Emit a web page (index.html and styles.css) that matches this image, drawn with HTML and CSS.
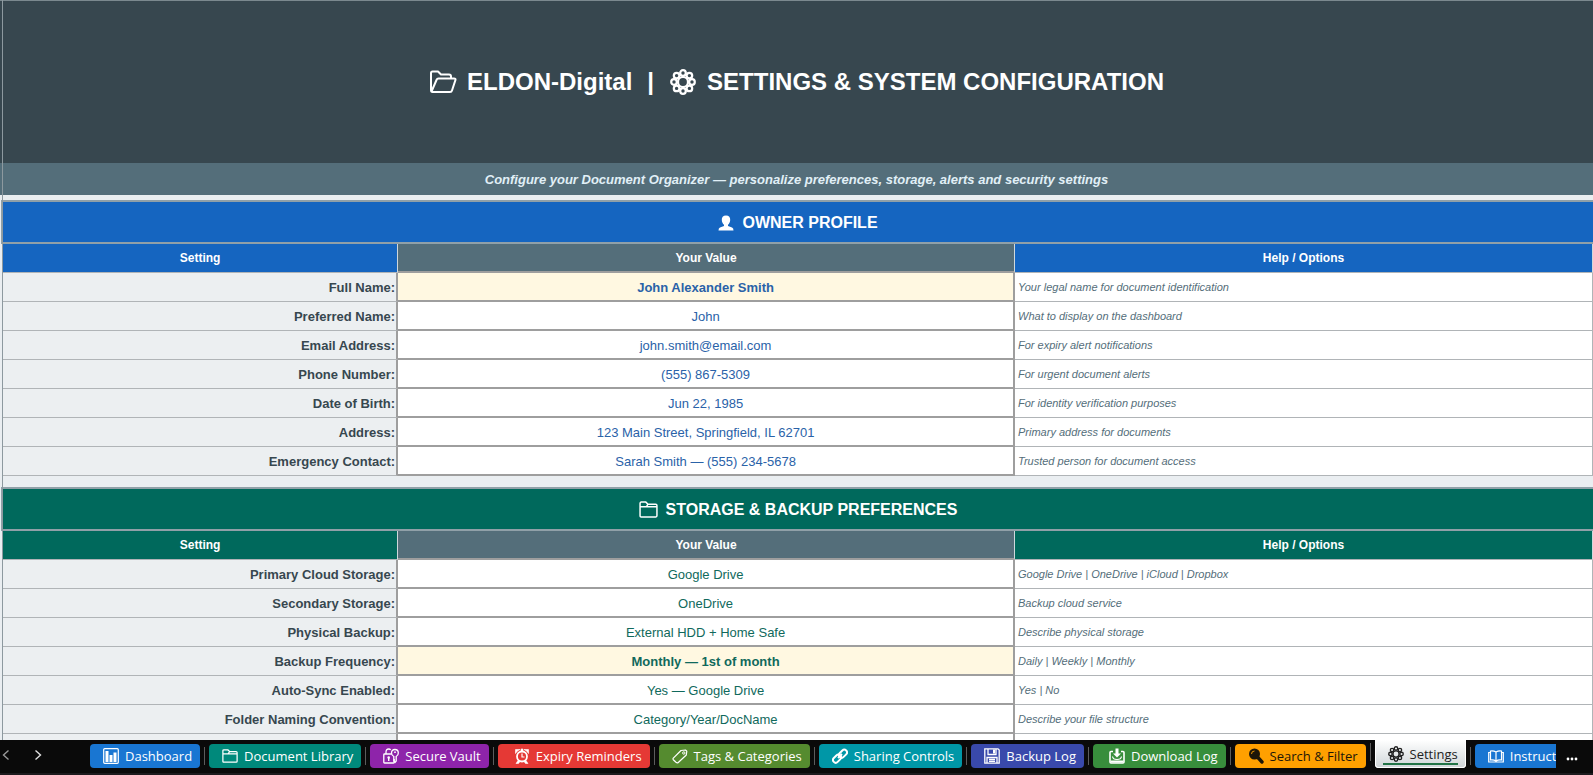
FILE: index.html
```html
<!DOCTYPE html>
<html lang="en">
<head>
    <meta charset="UTF-8">
    <meta name="viewport" content="width=device-width, initial-scale=1.0">
    <title>ELDON-Digital | Settings</title>
    <link rel="stylesheet" href="styles.css">
</head>
<body>
    <!-- Shared icons -->
    <svg class="icon-defs" aria-hidden="true">
        <symbol id="icon-gear" viewBox="0 0 26 26">
            <g fill="none" stroke="currentColor" stroke-width="2.2">
                <circle cx="13" cy="13" r="5"/>
                <circle cx="13" cy="4" r="2.800"/>
                <circle cx="19.400" cy="6.600" r="2.800"/>
                <circle cx="22" cy="13" r="2.800"/>
                <circle cx="19.400" cy="19.400" r="2.800"/>
                <circle cx="13" cy="22" r="2.800"/>
                <circle cx="6.600" cy="19.400" r="2.800"/>
                <circle cx="4" cy="13" r="2.800"/>
                <circle cx="6.600" cy="6.600" r="2.800"/>
            </g>
        </symbol>
        <symbol id="icon-folder" viewBox="0 0 18 16">
            <path d="M1 14V2.2Q1 1 2.2 1H6.5L8.5 3H15.8Q17 3 17 4.2V14Q17 15 16 15H2Q1 15 1 14ZM1 5.5H7L8.5 3M7 5.500H17" fill="none" stroke="currentColor" stroke-width="1.4" stroke-linejoin="round"/>
        </symbol>
    </svg>

    <main class="sheet">
        <header class="sheet-header">
            <h1 class="title">
                <svg class="title-icon" viewBox="0 0 28 24"><path d="M2 20V3Q2 1.5 3.500 1.500H9L12 4.500H20Q22 4.500 22 6.500V8.500M2.500 21.500L7.500 10Q8 8.500 9.500 8.500H25Q27 8.500 26.400 10.200L23 20.500Q22.600 22 21 22H3.500Q2 22 2 20" fill="none" stroke="currentColor" stroke-width="2" stroke-linejoin="round"/></svg>
                <span>ELDON-Digital</span>
                <span class="divider">|</span>
                <svg class="title-icon"><use href="#icon-gear"/></svg>
                <span>SETTINGS &amp; SYSTEM CONFIGURATION</span>
            </h1>
        </header>
        <p class="subtitle">Configure your Document Organizer — personalize preferences, storage, alerts and security settings</p>

        <section class="section profile">
            <h2 class="section-title">
                <svg class="person-icon" viewBox="0 0 16 16"><path d="M8 0.500C5 0.500 3.600 2.400 3.800 5C3.900 7.200 4.800 8.700 6 9.800V11L2 12.500Q0.500 13.200 0.500 15.500H15.500Q15.500 13.200 14 12.500L10 11V9.800C11.200 8.700 12.100 7.200 12.200 5C12.400 2.400 11 0.500 8 0.500Z" fill="currentColor"/></svg>
                OWNER PROFILE
            </h2>
            <table>
                <thead>
                    <tr><th scope="col" class="col-setting">Setting</th><th scope="col" class="col-value">Your Value</th><th scope="col" class="col-help">Help / Options</th></tr>
                </thead>
                <tbody>
                    <tr><th scope="row">Full Name:</th><td class="value highlight">John Alexander Smith</td><td class="help">Your legal name for document identification</td></tr>
                    <tr><th scope="row">Preferred Name:</th><td class="value">John</td><td class="help">What to display on the dashboard</td></tr>
                    <tr><th scope="row">Email Address:</th><td class="value">john.smith@email.com</td><td class="help">For expiry alert notifications</td></tr>
                    <tr><th scope="row">Phone Number:</th><td class="value">(555) 867-5309</td><td class="help">For urgent document alerts</td></tr>
                    <tr><th scope="row">Date of Birth:</th><td class="value">Jun 22, 1985</td><td class="help">For identity verification purposes</td></tr>
                    <tr><th scope="row">Address:</th><td class="value">123 Main Street, Springfield, IL 62701</td><td class="help">Primary address for documents</td></tr>
                    <tr><th scope="row">Emergency Contact:</th><td class="value">Sarah Smith — (555) 234-5678</td><td class="help">Trusted person for document access</td></tr>
                </tbody>
            </table>
        </section>

        <section class="section storage">
            <h2 class="section-title">
                <svg class="folder-icon"><use href="#icon-folder"/></svg>
                STORAGE &amp; BACKUP PREFERENCES
            </h2>
            <table>
                <thead>
                    <tr><th scope="col" class="col-setting">Setting</th><th scope="col" class="col-value">Your Value</th><th scope="col" class="col-help">Help / Options</th></tr>
                </thead>
                <tbody>
                    <tr><th scope="row">Primary Cloud Storage:</th><td class="value">Google Drive</td><td class="help">Google Drive | OneDrive | iCloud | Dropbox</td></tr>
                    <tr><th scope="row">Secondary Storage:</th><td class="value">OneDrive</td><td class="help">Backup cloud service</td></tr>
                    <tr><th scope="row">Physical Backup:</th><td class="value">External HDD + Home Safe</td><td class="help">Describe physical storage</td></tr>
                    <tr><th scope="row">Backup Frequency:</th><td class="value highlight">Monthly — 1st of month</td><td class="help">Daily | Weekly | Monthly</td></tr>
                    <tr><th scope="row">Auto-Sync Enabled:</th><td class="value">Yes — Google Drive</td><td class="help">Yes | No</td></tr>
                    <tr><th scope="row">Folder Naming Convention:</th><td class="value">Category/Year/DocName</td><td class="help">Describe your file structure</td></tr>
                    <tr><th scope="row"></th><td class="value"></td><td class="help"></td></tr>
                </tbody>
            </table>
        </section>
    </main>

    <nav class="tab-bar">
        <div class="arrows">
            <button class="arrow dim" aria-label="Previous sheets"><svg viewBox="0 0 8 12"><path d="M6.500 1.500L1.500 6L6.500 10.500"/></svg></button>
            <button class="arrow" aria-label="Next sheets"><svg viewBox="0 0 8 12"><path d="M1.500 1.500L6.500 6L1.500 10.500"/></svg></button>
        </div>
        <div class="tabs">
            <button class="tab tab-dashboard">
                <svg viewBox="0 0 16 16"><rect x="0.700" y="0.700" width="14.600" height="14.600" rx="1" fill="none" stroke="currentColor" stroke-width="1.200"/><path d="M2.500 3H5.500V14H2.500ZM6.500 7H9.500V14H6.500ZM10.500 4.500H13.500V14H10.500Z" fill="currentColor"/></svg>
                Dashboard
            </button>
            <button class="tab tab-library">
                <svg viewBox="0 0 18 16"><use href="#icon-folder"/></svg>
                Document Library
            </button>
            <button class="tab tab-vault">
                <svg viewBox="0 0 16 16"><g fill="none" stroke="currentColor" stroke-width="1.300"><path d="M8.500 6H1.500Q0.800 6 0.800 6.700V14.300Q0.800 15 1.500 15H10.500Q11.200 15 11.200 14.300V11M3 6V4Q3 1 5.700 1Q7 1 7.700 2"/><path d="M10.800 8.500Q8.500 7.500 8.500 5Q8.500 1.500 11.900 1.500Q15.300 1.500 15.300 5Q15.300 7.500 13.200 8.500V13L12 14.500L10.800 13Z"/></g><circle cx="5.700" cy="9.500" r="1.300" fill="currentColor"/><path d="M5 10H6.400V13H5Z" fill="currentColor"/><circle cx="12" cy="4.200" r="0.900" fill="currentColor"/></svg>
                Secure Vault
            </button>
            <button class="tab tab-expiry">
                <svg viewBox="0 0 16 16"><circle cx="8" cy="8.500" r="5" fill="none" stroke="currentColor" stroke-width="1.800"/><path d="M8 5.500V9H10.500" fill="none" stroke="currentColor" stroke-width="1.200"/><path d="M1.500 5.500V1.500H6Q3 2.500 1.500 5.500ZM14.500 5.500V1.500H10Q13 2.500 14.500 5.500ZM2 15.500L4 12.500L6 13.500L4.500 15.500ZM14 15.500L12 12.500L10 13.500L11.500 15.500ZM7 1H9V3H7Z" fill="currentColor" stroke="currentColor" stroke-width="0.600"/></svg>
                Expiry Reminders
            </button>
            <button class="tab tab-tags">
                <svg viewBox="0 0 16 16"><path d="M1.300 10.200L9 2.500L13.500 2L14.800 3.200L14.300 7L6 14.700Q5 15.200 4 14.300L1.300 11.700Q0.700 11 1.300 10.200Z" fill="none" stroke="currentColor" stroke-width="1.200" stroke-linejoin="round"/><circle cx="11.800" cy="5" r="1.200" fill="none" stroke="currentColor"/></svg>
                Tags &amp; Categories
            </button>
            <button class="tab tab-sharing">
                <svg viewBox="0 0 16 16"><g fill="none" stroke="currentColor" stroke-width="2"><rect x="6.500" y="3" width="9" height="5.400" rx="2.700" transform="rotate(-45 11 5.700)"/><rect x="0.500" y="8" width="9" height="5.400" rx="2.700" transform="rotate(-45 5 10.700)"/><path d="M6 10L10 6"/></g></svg>
                Sharing Controls
            </button>
            <button class="tab tab-backup">
                <svg viewBox="0 0 16 16"><g fill="none" stroke="currentColor" stroke-width="1.300"><path d="M0.800 0.800H14L15.200 2V15.200H0.800Z"/><path d="M4 1V6.500H12V1M3 15V9.500H13V15M5 11.500H11M5 13.300H11"/></g><path d="M9 1.500H11V5.500H9Z" fill="currentColor"/></svg>
                Backup Log
            </button>
            <button class="tab tab-download">
                <svg viewBox="0 0 16 16"><path d="M4 3.500H2Q1 3.500 1 4.500V14Q1 15 2 15H14Q15 15 15 14V4.500Q15 3.500 14 3.500H12" fill="none" stroke="currentColor" stroke-width="1.600"/><path d="M6.500 0.500H9.500V5.500H12L8 9.500L4 5.500H6.500Z" fill="currentColor"/><path d="M3.500 8.500Q4 11.500 8 11.500Q12 11.500 12.500 8.500" fill="none" stroke="currentColor" stroke-width="1.200"/><path d="M1.500 12.500H14.500V14.500H1.500Z" fill="currentColor"/></svg>
                Download Log
            </button>
            <button class="tab tab-search">
                <svg viewBox="0 0 16 16"><circle cx="6.500" cy="6" r="5.500" fill="currentColor"/><path d="M9.500 9L14 14" stroke="currentColor" stroke-width="3.400" stroke-linecap="round"/><path d="M3.500 6Q3.500 3 6.500 3" fill="none" stroke="#ffa000" stroke-width="0.900"/></svg>
                Search &amp; Filter
            </button>
            <button class="tab tab-settings" aria-current="page">
                <svg viewBox="0 0 26 26"><use href="#icon-gear"/></svg>
                <span>Settings</span>
            </button>
            <button class="tab tab-instructions">
                <svg viewBox="0 0 16 16"><path d="M8 4Q5.500 2.500 2.500 3V12Q5.500 11.500 8 13Q10.500 11.500 13.500 12V3Q10.500 2.500 8 4V13M2.500 4.500H0.700V14H15.300V4.500H13.500" fill="none" stroke="currentColor" stroke-width="1.200"/></svg>
                Instructions
            </button>
        </div>
        <button class="more" aria-label="More sheets"><svg viewBox="0 0 12 4"><circle cx="2" cy="2" r="1.400"/><circle cx="6" cy="2" r="1.400"/><circle cx="10" cy="2" r="1.400"/></svg></button>
    </nav>
</body>
</html>
```
FILE: styles.css
```css
* {
    box-sizing: border-box;
}
body {
    display: flex;
    flex-direction: column;
    height: 100vh;
    margin: 0;
    overflow: hidden;
    background-color: #eaeef1;
    font-family: "Liberation Sans", Arial, sans-serif;
}
button {
    border: none;
    font-family: inherit;
    cursor: pointer;
}
.icon-defs {
    position: absolute;
    width: 0;
    height: 0;
}

/* Sheet */
.sheet {
    position: relative;
    flex: 1;
    min-height: 0;
    overflow: hidden;
}
/* gridline down the left edge */
.sheet::before {
    content: "";
    position: absolute;
    top: 0;
    bottom: 0;
    left: 2px;
    width: 1px;
    background-color: #8d999f;
}
.sheet-header {
    border-top: 1px solid #7b898f;
    background-color: #37474f;
    color: white;
}
.title {
    display: flex;
    justify-content: center;
    align-items: center;
    gap: 10px;
    margin: 0;
    padding: 66px 0;
    font-size: 24px;
    line-height: 30px;
}
.title-icon {
    width: 28px;
    height: 26px;
}
.divider {
    padding: 0 5px;
}
.subtitle {
    margin: 0 0 5px;
    padding-top: 2px;
    background-color: #546e7a;
    color: #e1f0f7;
    font-size: 13px;
    font-style: italic;
    font-weight: bold;
    line-height: 30px;
    text-align: center;
}
.section {
    margin: 0 0 11px 2px;
}
.section-title {
    display: flex;
    justify-content: center;
    align-items: center;
    gap: 8px;
    margin: 0 0 0 -1px;
    padding-top: 1px;
    border: 2px solid #90a0a8;
    border-right: none;
    color: white;
    font-size: 16px;
    line-height: 39px;
}
.person-icon {
    width: 16px;
    height: 16px;
}
.folder-icon {
    width: 19px;
    height: 17px;
}

/* Settings tables */
table {
    width: 100%;
    table-layout: fixed;
    border-collapse: separate;
    border-spacing: 0;
    border-left: 1px solid #9e9e9e;
    background-color: white;
}
thead th {
    height: 29px;
    padding: 0;
    border-right: 1px solid #cfd8dc;
    border-bottom: 1px solid #b0b4b7;
    color: white;
    font-size: 12px;
}
.col-setting {
    width: 24.85%;
}
thead .col-value {
    width: 38.8%;
    border-bottom: 2px solid #9e9e9e;
    background-color: #546e7a;
}
.profile .section-title,
.profile .col-setting,
.profile .col-help {
    background-color: #1565c0;
}
.storage .section-title,
.storage .col-setting,
.storage .col-help {
    background-color: #00695c;
}
tbody th,
td {
    height: 29px;
    padding: 1px 3px 0;
    border-bottom: 1px solid #b0b4b7;
}
tbody th {
    padding-right: 1px;
    border-right: 2px solid #9e9e9e;
    background-color: #eceff1;
    color: #37474f;
    font-size: 13px;
    text-align: right;
}
.value {
    border-right: 2px solid #9e9e9e;
    border-bottom: 2px solid #9e9e9e;
    font-size: 13px;
    text-align: center;
}
.profile .value {
    color: #2a62a8;
}
.storage .value {
    color: #10695c;
}
.highlight {
    background-color: #fff8e1;
    font-weight: bold;
}
.help {
    padding-top: 0;
    border-right: 1px solid #b0b4b7;
    color: #546e7a;
    font-size: 11px;
    font-style: italic;
}

/* Sheet tabs */
.tab-bar {
    display: flex;
    height: 35px;
    padding-top: 4px;
    border-bottom: 2px solid #1c1a1d;
    background-color: #0a0a0a;
    font-family: "Open Sans", "Noto Sans", sans-serif;
}
.arrows {
    display: flex;
    flex: none;
    width: 90px;
    height: 24px;
}
.arrow {
    width: 32px;
    padding: 0 0 0 2px;
    background: none;
    text-align: left;
}
.arrow svg {
    width: 8px;
    height: 12px;
    fill: none;
    stroke: #e0e0e0;
    stroke-width: 1.4;
}
.arrow.dim svg {
    stroke: #9a9a9a;
}
.tabs {
    display: flex;
    flex: 1;
    gap: 9px;
    min-width: 0;
    margin-top: -4px;
    padding-top: 4px;
    overflow: hidden;
}
.tab {
    display: flex;
    flex: none;
    align-items: center;
    gap: 6px;
    height: 24px;
    padding: 0 8px 0 13px;
    border-radius: 4px;
    color: white;
    font-size: 13px;
    line-height: 24px;
    white-space: nowrap;
}
.tab svg {
    width: 16px;
    height: 16px;
}
.tab + .tab {
    position: relative;
}
.tab + .tab::before {
    content: "";
    position: absolute;
    top: 3px;
    left: -5px;
    width: 1px;
    height: 18px;
    background-color: #5c5c5c;
}
.tab-dashboard {
    background-color: #1976d2;
}
.tab-library {
    background-color: #00897b;
}
.tab-vault {
    background-color: #8e24aa;
}
.tab-expiry {
    padding-left: 16px;
    background-color: #e53935;
}
.tab-tags {
    background-color: #558b2f;
}
.tab-sharing {
    background-color: #0097a7;
}
.tab-backup {
    background-color: #3949ab;
}
.tab-download {
    padding-left: 16px;
    background-color: #388e3c;
}
.tab-search {
    background-color: #ffa000;
    color: #1c1608;
}
.tab-settings {
    height: 28px;
    margin-top: -4px;
    border-radius: 0 0 4px 4px;
    background: linear-gradient(white, #cfd5d8);
    box-shadow: inset 0 -1px white, inset 1px 0 white, inset -1px 0 white;
    color: #222;
}
.tab-settings::after {
    content: "";
    position: absolute;
    right: 8px;
    bottom: 3px;
    left: 8px;
    height: 2px;
    background-color: #217346;
}
.tab-instructions {
    background-color: #1976d2;
}
.more {
    flex: none;
    width: 37px;
    height: 24px;
    padding: 0 6px 0 0;
    background: none;
}
.more svg {
    width: 12px;
    height: 4px;
    fill: white;
}
```
